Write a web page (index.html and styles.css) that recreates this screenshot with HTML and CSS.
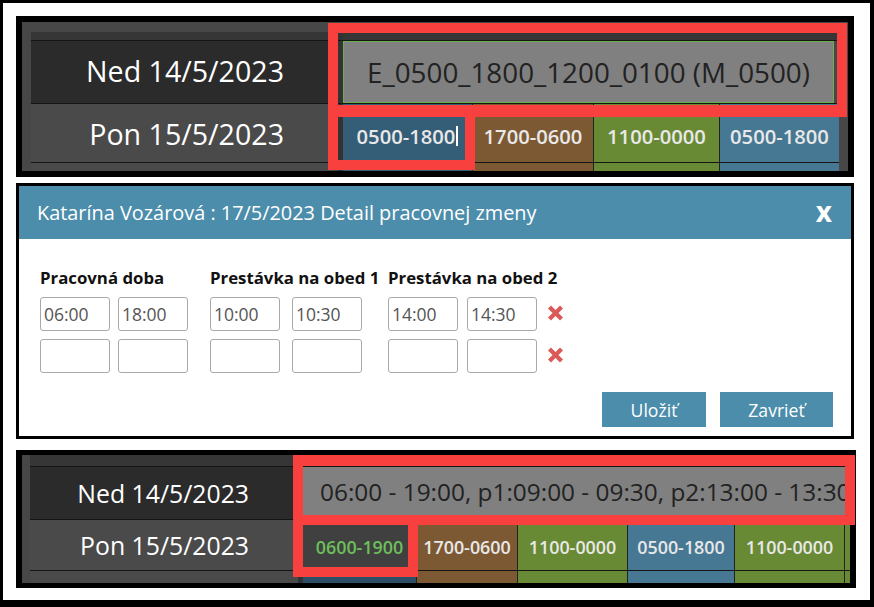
FILE: index.html
```html
<!DOCTYPE html>
<html lang="sk">
<head>
  <meta charset="UTF-8">
  <title>Detail pracovnej zmeny</title>
  <link rel="stylesheet" href="styles.css">
</head>
<body>
  <div class="frame">

    <section class="sched top">
      <div class="grid">
        <div class="row head"><div class="date"></div><div class="days"></div></div>
        <div class="row ned">
          <div class="date">Ned 14/5/2023</div>
          <div class="days"><div class="shift-input center">E_0500_1800_1200_0100 (M_0500)</div></div>
        </div>
        <div class="row pon">
          <div class="date">Pon 15/5/2023</div>
          <div class="days">
            <div class="cell blue sel">0500-1800<span class="caret"></span></div>
            <div class="cell brown">1700-0600</div>
            <div class="cell green">1100-0000</div>
            <div class="cell blue last">0500-1800</div>
          </div>
        </div>
        <div class="row rest">
          <div class="date"></div>
          <div class="days">
            <div class="cell blue sel"></div>
            <div class="cell brown"></div>
            <div class="cell green"></div>
            <div class="cell blue last"></div>
          </div>
        </div>
      </div>
      <div class="mark mark-a"></div>
      <div class="mark mark-b"></div>
    </section>

    <section class="dialog">
      <div class="dlg-head">
        <span>Katarína Vozárová : 17/5/2023 Detail pracovnej zmeny</span>
        <span class="close">x</span>
      </div>
      <div class="dlg-body">
        <div class="fields">
          <div class="grp g1">
            <div class="lbl">Pracovná doba</div>
            <div class="pair"><input type="text" value="06:00"><input type="text" value="18:00"></div>
            <div class="pair"><input type="text"><input type="text"></div>
          </div>
          <div class="grp g2">
            <div class="lbl">Prestávka na obed 1</div>
            <div class="pair"><input type="text" value="10:00"><input type="text" value="10:30"></div>
            <div class="pair"><input type="text"><input type="text"></div>
          </div>
          <div class="grp g3">
            <div class="lbl">Prestávka na obed 2</div>
            <div class="pair"><input type="text" value="14:00"><input type="text" value="14:30"></div>
            <div class="pair"><input type="text"><input type="text"></div>
          </div>
          <div class="grp del">
            <div class="lbl"></div>
            <div class="del-slot">
              <svg width="17" height="16" viewBox="0 0 17 16"><path d="M2.5 2 L14.5 14 M14.5 2 L2.5 14" stroke="#db5a58" stroke-width="4.2"/></svg>
            </div>
            <div class="del-slot">
              <svg width="17" height="16" viewBox="0 0 17 16"><path d="M2.5 2 L14.5 14 M14.5 2 L2.5 14" stroke="#db5a58" stroke-width="4.2"/></svg>
            </div>
          </div>
        </div>
        <div class="actions">
          <button type="button" class="btn save">Uložiť</button>
          <button type="button" class="btn closebtn">Zavrieť</button>
        </div>
      </div>
    </section>

    <section class="sched bottom">
      <div class="grid">
        <div class="row head"><div class="date"></div><div class="days"></div></div>
        <div class="row ned">
          <div class="date">Ned 14/5/2023</div>
          <div class="days"><div class="shift-input">06:00 - 19:00, p1:09:00 - 09:30, p2:13:00 - 13:30</div></div>
        </div>
        <div class="row pon">
          <div class="date">Pon 15/5/2023</div>
          <div class="days">
            <div class="cell dark">0600-1900</div>
            <div class="cell brown">1700-0600</div>
            <div class="cell green">1100-0000</div>
            <div class="cell blue">0500-1800</div>
            <div class="cell green">1100-0000</div>
            <div class="cell green last"></div>
          </div>
        </div>
        <div class="row rest">
          <div class="date"></div>
          <div class="days">
            <div class="cell blue-dk"></div>
            <div class="cell brown"></div>
            <div class="cell green"></div>
            <div class="cell blue"></div>
            <div class="cell green"></div>
            <div class="cell green last"></div>
          </div>
        </div>
      </div>
      <div class="mark mark-a"></div>
      <div class="mark mark-b"></div>
    </section>

  </div>
</body>
</html>
```

FILE: styles.css
```css
* { box-sizing: border-box; }
body { margin: 0; background: #fff; font-family: "Open Sans", "Noto Sans", sans-serif; }

.frame {
  width: 874px;
  height: 607px;
  border: solid #000;
  border-width: 3px 4px 7px 3px;
  padding: 13px 14px 0 13px;
  display: flex;
  flex-direction: column;
}

/* schedule panels */
.sched { position: relative; background: #474747; border: 6px solid #000; flex: none; }
.sched.top { width: 838px; height: 161px; padding: 10px 9px 0 9px; }
.sched.bottom { width: 840px; height: 138px; border-width: 5px 6px; padding: 0 0 0 8px; margin-top: 11px; }

.grid { display: flex; flex-direction: column; overflow: hidden; }
.top .grid { height: 139px; }
.bottom .grid { height: 128px; }

.row { display: flex; border-bottom: 1px solid #151515; flex: none; }
.row.rest { flex: 1; border-bottom: none; }
.row .date {
  flex: none;
  display: flex;
  align-items: center;
  justify-content: flex-end;
  color: #fff;
  white-space: nowrap;
}
.row .days { flex: 1; display: flex; border-left: 5px solid #333; min-width: 0; }
.head .date, .head .days { background: #363636; }
.ned .date { background: #2b2b2b; }
.pon .date, .rest .date { background: #4a4a4a; }

.top .date { width: 307px; padding-right: 54px; font-size: 28.6px; }
.top .head { height: 9px; }
.top .ned { height: 63px; }
.top .ned .date { padding-bottom: 4px; }
.top .pon { height: 59px; }

.bottom .date { width: 268px; padding-right: 49px; font-size: 24.8px; }
.bottom .head { height: 12px; }
.bottom .ned { height: 53px; }
.bottom .pon { height: 51px; }

.shift-input {
  background: #808080;
  color: #222;
  white-space: nowrap;
  overflow: hidden;
  display: flex;
  align-items: center;
}
.top .shift-input {
  flex: 1;
  margin-right: 5px;
  border: 1px solid #6ab04c;
  justify-content: center;
  font-size: 27.8px;
}
.bottom .shift-input {
  flex: 1;
  margin-right: 5px;
  margin-bottom: 4px;
  padding-left: 17px;
  font-size: 24.4px;
}

.cell {
  flex: none;
  display: flex;
  align-items: center;
  justify-content: center;
  padding-top: 5px;
  border-right: 1px solid #222;
  color: #e8e8e8;
  font-weight: 600;
  white-space: nowrap;
}
.cell.last { flex: 1; border-right: none; }
.blue { background: #467793; }
.blue.sel { background: #345d77; }
.blue-dk { background: #2f4f66; }
.brown { background: #7c5933; }
.green { background: #698a34; }
.dark { background: #404040; color: #6cbf5a; }

.top .cell { font-size: 20.2px; }
.top .cell:nth-child(1) { width: 130px; }
.top .cell:nth-child(2) { width: 121px; }
.top .cell:nth-child(3) { width: 126px; }
.caret { display: inline-block; width: 2px; height: 20px; background: #fff; margin-left: 1px; }

.bottom .cell { font-size: 17.9px; padding-top: 4px; }
.bottom .cell:nth-child(1) { width: 114px; }
.bottom .cell:nth-child(2) { width: 101px; }
.bottom .cell:nth-child(3) { width: 110px; }
.bottom .cell:nth-child(4) { width: 107px; }
.bottom .cell:nth-child(5) { width: 110px; }

/* red annotation frames */
.mark { position: absolute; border: 10px solid #f8413f; }
.top .mark-a { left: 306px; top: 1px; width: 519px; height: 94px; border-bottom-width: 12px; }
.top .mark-b { left: 306px; top: 83px; width: 147px; height: 65px; border-top-width: 12px; }
.bottom .mark-a { left: 271px; top: 0; width: 562px; height: 70px; border-top-width: 11px; }
.bottom .mark-b { left: 271px; top: 60px; width: 125px; height: 62px; }

/* dialog */
.dialog {
  flex: none;
  width: 838px;
  height: 256px;
  margin-top: 6px;
  border: 3px solid #000;
  background: #fff;
  display: flex;
  flex-direction: column;
}
.dlg-head {
  height: 53px;
  background: #4b8dab;
  color: #fff;
  font-size: 19.9px;
  display: flex;
  align-items: center;
  justify-content: space-between;
  padding: 0 19px 0 18px;
}
.close { font-size: 28px; font-weight: 700; line-height: 1; margin-top: -4px; }
.dlg-body { flex: 1; padding: 29px 18px 9px 21px; display: flex; flex-direction: column; }

.fields { display: flex; }
.grp { display: flex; flex-direction: column; gap: 8px; }
.g1 { width: 148px; }
.g2 { margin-left: 22px; width: 152px; }
.g3 { margin-left: 26px; width: 149px; }
.del { margin-left: 10px; }
.lbl { height: 20px; margin-bottom: 1px; font-size: 16.8px; font-weight: 700; color: #111; white-space: nowrap; line-height: 20px; }
.pair { display: flex; gap: 8px; }
.g2 .pair { gap: 12px; }
.g3 .pair { gap: 9px; }
.pair input {
  width: 70px;
  height: 34px;
  border: 1px solid #a9a9a9;
  border-radius: 3px;
  padding: 0 3px;
  font-family: "Open Sans", "Noto Sans", sans-serif;
  font-size: 17.5px;
  color: #555;
}
.del-slot { height: 34px; display: flex; align-items: center; padding-bottom: 3px; }

.actions { display: flex; justify-content: flex-end; gap: 14px; margin-top: 19px; }
.btn {
  height: 35px;
  border: none;
  background: #4b8dab;
  color: #fff;
  font-family: "Open Sans", "Noto Sans", sans-serif;
  font-size: 17.6px;
  cursor: pointer;
}
.btn.save { width: 104px; }
.btn.closebtn { width: 113px; }
```
